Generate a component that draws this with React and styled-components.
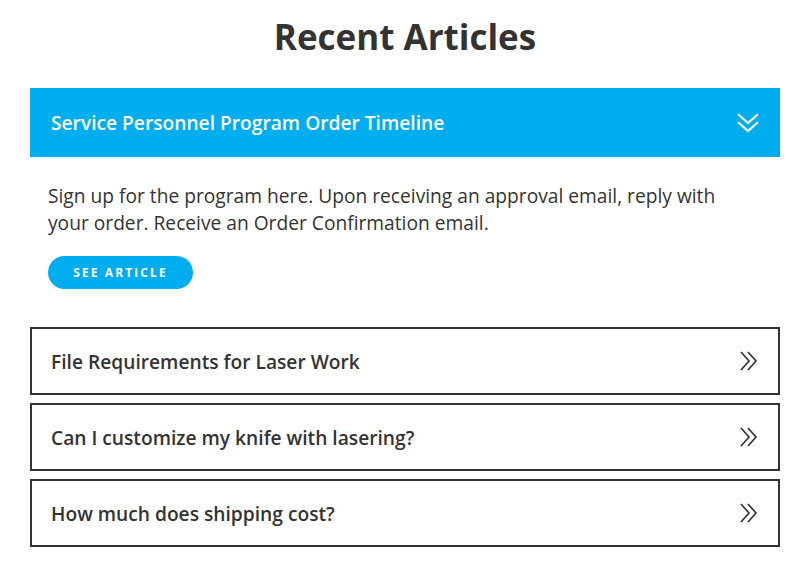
import styled, { createGlobalStyle } from "styled-components"

const GlobalStyle = createGlobalStyle`
    body {
        margin: 0;
        background: #fff;
        font-family: "Open Sans", "Liberation Sans", sans-serif;
        color: #333;
    }
`

const articles = [
    { title: "File Requirements for Laser Work" },
    { title: "Can I customize my knife with lasering?" },
    { title: "How much does shipping cost?" },
]

const ChevronsDown = () => (
    <svg width="24" height="24" viewBox="0 0 24 24" fill="none" stroke="#fff" strokeWidth="2.2" strokeLinecap="square">
        <polyline points="3,4 12,12 21,4" />
        <polyline points="3,12 12,20 21,12" />
    </svg>
)

const ChevronsRight = () => (
    <svg width="22" height="24" viewBox="0 0 22 24" fill="none" stroke="#333" strokeWidth="1.7">
        <polyline points="3,3 11,12 3,21" />
        <polyline points="10,3 18,12 10,21" />
    </svg>
)

const App = () => {
    return (
        <Wrapper>
            <GlobalStyle />
            <Title>Recent Articles</Title>

            <OpenItem>
                <OpenHeader>
                    <OpenTitle>Service Personnel Program Order Timeline</OpenTitle>
                    <ChevronsDown />
                </OpenHeader>
                <Body>
                    <Text>
                        Sign up for the program here. Upon receiving an approval email, reply with your order. Receive an Order Confirmation email.
                    </Text>
                    <Button>See Article</Button>
                </Body>
            </OpenItem>

            <List>
                {articles.map((a) => (
                    <Item key={a.title}>
                        <ItemTitle>{a.title}</ItemTitle>
                        <ChevronsRight />
                    </Item>
                ))}
            </List>
        </Wrapper>
    )
}

export default App

const Wrapper = styled.div`
    width: 750px;
    padding: 0 30px;
    display: flex;
    flex-direction: column;
`

const Title = styled.h1`
    margin: 15px 0 29px;
    text-align: center;
    font-size: 35px;
    line-height: 44px;
    font-weight: 700;
    color: #333;
`

const OpenItem = styled.div`
    display: flex;
    flex-direction: column;
`

const OpenHeader = styled.div`
    height: 69px;
    background: #00adef;
    display: flex;
    align-items: center;
    justify-content: space-between;
    padding: 0 20px 0 21px;
`

const OpenTitle = styled.span`
    color: #fff;
    font-size: 19.2px;
    font-weight: 600;
`

const Body = styled.div`
    padding: 25px 18px 38px;
    display: flex;
    flex-direction: column;
    align-items: flex-start;
`

const Text = styled.p`
    margin: 0 0 20px;
    max-width: 690px;
    font-size: 19.2px;
    line-height: 27px;
    color: #333;
`

const Button = styled.button`
    height: 33px;
    width: 145px;
    border: none;
    border-radius: 17px;
    background: #00adef;
    color: #fff;
    font-family: "Open Sans", "Liberation Sans", sans-serif;
    font-size: 12px;
    font-weight: 700;
    letter-spacing: 2.1px;
    text-transform: uppercase;
    cursor: pointer;
`

const List = styled.div`
    display: flex;
    flex-direction: column;
    gap: 8px;
`

const Item = styled.div`
    height: 68px;
    box-sizing: border-box;
    border: 2px solid #333;
    display: flex;
    align-items: center;
    justify-content: space-between;
    padding: 0 18px 0 19px;
`

const ItemTitle = styled.span`
    font-size: 19.2px;
    font-weight: 600;
    color: #333;
`
